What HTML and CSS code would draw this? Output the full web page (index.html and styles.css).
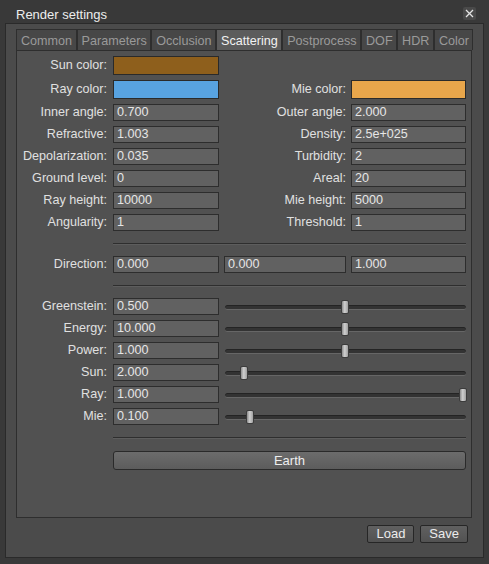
FILE: index.html
```html
<!DOCTYPE html>
<html lang="en">
<head>
    <meta charset="UTF-8">
    <title>Render settings</title>
    <link rel="stylesheet" href="styles.css">
</head>
<body>
    <div class="titlebar">
        <span class="title">Render settings</span>
        <span class="close">
            <svg width="13" height="13" viewBox="0 0 13 13"><path d="M3 3 L10 10 M10 3 L3 10" stroke="#e4e4e4" stroke-width="1.3" fill="none"/></svg>
        </span>
    </div>

    <div class="dialog">
        <div class="tabs">
            <div class="tab">Common</div>
            <div class="tab">Parameters</div>
            <div class="tab">Occlusion</div>
            <div class="tab active">Scattering</div>
            <div class="tab">Postprocess</div>
            <div class="tab">DOF</div>
            <div class="tab">HDR</div>
            <div class="tab">Color</div>
        </div>

        <div class="pane">
            <div class="form">
                <div class="row">
                    <div class="label">Sun color:</div>
                    <div class="swatch sun"></div>
                </div>
                <div class="row">
                    <div class="label">Ray color:</div>
                    <div class="swatch ray"></div>
                    <div class="label right">Mie color:</div>
                    <div class="swatch mie"></div>
                </div>
                <div class="row">
                    <div class="label">Inner angle:</div>
                    <div class="field">0.700</div>
                    <div class="label right">Outer angle:</div>
                    <div class="field">2.000</div>
                </div>
                <div class="row">
                    <div class="label">Refractive:</div>
                    <div class="field">1.003</div>
                    <div class="label right">Density:</div>
                    <div class="field">2.5e+025</div>
                </div>
                <div class="row">
                    <div class="label">Depolarization:</div>
                    <div class="field">0.035</div>
                    <div class="label right">Turbidity:</div>
                    <div class="field">2</div>
                </div>
                <div class="row">
                    <div class="label">Ground level:</div>
                    <div class="field">0</div>
                    <div class="label right">Areal:</div>
                    <div class="field">20</div>
                </div>
                <div class="row">
                    <div class="label">Ray height:</div>
                    <div class="field">10000</div>
                    <div class="label right">Mie height:</div>
                    <div class="field">5000</div>
                </div>
                <div class="row">
                    <div class="label">Angularity:</div>
                    <div class="field">1</div>
                    <div class="label right">Threshold:</div>
                    <div class="field">1</div>
                </div>

                <div class="sep"></div>

                <div class="row">
                    <div class="label">Direction:</div>
                    <div class="field">0.000</div>
                    <div class="field mid">0.000</div>
                    <div class="field">1.000</div>
                </div>

                <div class="sep"></div>

                <div class="row">
                    <div class="label">Greenstein:</div>
                    <div class="field">0.500</div>
                    <div class="slider"><div class="groove"></div><div class="knob" style="left: 116px"></div></div>
                </div>
                <div class="row">
                    <div class="label">Energy:</div>
                    <div class="field">10.000</div>
                    <div class="slider"><div class="groove"></div><div class="knob" style="left: 116px"></div></div>
                </div>
                <div class="row">
                    <div class="label">Power:</div>
                    <div class="field">1.000</div>
                    <div class="slider"><div class="groove"></div><div class="knob" style="left: 116px"></div></div>
                </div>
                <div class="row">
                    <div class="label">Sun:</div>
                    <div class="field">2.000</div>
                    <div class="slider"><div class="groove"></div><div class="knob" style="left: 15px"></div></div>
                </div>
                <div class="row">
                    <div class="label">Ray:</div>
                    <div class="field">1.000</div>
                    <div class="slider"><div class="groove"></div><div class="knob" style="left: 234px"></div></div>
                </div>
                <div class="row">
                    <div class="label">Mie:</div>
                    <div class="field">0.100</div>
                    <div class="slider"><div class="groove"></div><div class="knob" style="left: 21px"></div></div>
                </div>

                <div class="sep"></div>

                <button class="wide-btn">Earth</button>
            </div>
        </div>

        <div class="actions">
            <button class="btn">Load</button>
            <button class="btn">Save</button>
        </div>
    </div>
</body>
</html>
```

FILE: styles.css
```css
body {
    margin: 0;
    width: 489px;
    height: 564px;
    overflow: hidden;
    background: #393939;
    font-family: 'Liberation Sans', Arial, sans-serif;
    font-size: 12.6px;
    color: #e2e2e2;
}

.titlebar {
    height: 23px;
    box-sizing: border-box;
    display: flex;
    justify-content: space-between;
    align-items: flex-start;
    padding: 0 13px 0 16px;
}

.title {
    margin-top: 7px;
    line-height: 15px;
    font-size: 13px;
    color: #ededed;
}

.close {
    margin-top: 7px;
    width: 13px;
    height: 13px;
    background: #4a4a4a;
    border-radius: 2px;
    display: flex;
}

.dialog {
    margin: 0 5px;
    height: 535px;
    box-sizing: border-box;
    border: 1px solid #2a2a2a;
    background: #4b4b4b;
    padding: 5px 11px 0 10px;
}

.tabs {
    display: flex;
    height: 21px;
}

.tab {
    height: 21px;
    box-sizing: border-box;
    padding: 3px 3.5px 0 4px;
    line-height: 17px;
    border: 1px solid #2e2e2e;
    border-bottom: none;
    background: #474747;
    color: #9a9a9a;
    white-space: nowrap;
}

.tab.active {
    background: #5c5c5c;
    color: #f2f2f2;
}

.pane {
    height: 468px;
    box-sizing: border-box;
    border: 1px solid #2e2e2e;
    background: #515151;
    padding: 5px 5px 0 0;
}

.form {
    display: flex;
    flex-direction: column;
    gap: 5px;
}

.row {
    display: grid;
    grid-template-columns: 96px 106px 132px 115px;
    align-items: center;
}

.label {
    text-align: right;
    padding-right: 6px;
    line-height: 17px;
    white-space: nowrap;
    color: #e0e0e0;
}

.label.right {
    padding-right: 5px;
}

.field {
    height: 17px;
    box-sizing: border-box;
    border: 1px solid #2d2d2d;
    background: #616161;
    padding-left: 3px;
    line-height: 15px;
    color: #e6e6e6;
}

.field.mid {
    margin: 0 5px;
}

.swatch {
    height: 19px;
    box-sizing: border-box;
    border: 1px solid #2a2a2a;
}

.swatch.sun { background: #8e5f1c; }
.swatch.ray { background: #58a3e1; }
.swatch.mie { background: #e8a64b; }

.sep {
    margin: 7px 0 6px 96px;
    height: 2px;
    box-sizing: border-box;
    border-top: 1px solid #2e2e2e;
    border-bottom: 1px solid #5d5d5d;
}

.slider {
    grid-column: 3 / 5;
    margin-left: 6px;
    position: relative;
    height: 17px;
    display: flex;
    align-items: center;
}

.groove {
    flex: 1;
    margin-top: 2px;
    height: 5px;
    box-sizing: border-box;
    background: #333;
    border-top: 1px solid #242424;
    border-bottom: 1px solid #666;
    border-radius: 3px;
}

.knob {
    position: absolute;
    top: 2px;
    width: 8px;
    height: 14px;
    box-sizing: border-box;
    border: 1px solid #3c3c3c;
    border-radius: 2px;
    background: linear-gradient(to right, #8c8c8c, #cfcfcf 45%, #a0a0a0);
}

.wide-btn {
    margin: 1px 0 0 96px;
    height: 19px;
    box-sizing: border-box;
    border: 1px solid #2a2a2a;
    border-radius: 3px;
    background: linear-gradient(#6c6c6c, #5c5c5c);
    color: #eeeeee;
    font-family: inherit;
    font-size: 13px;
    line-height: 17px;
    padding: 0;
}

.actions {
    display: flex;
    justify-content: flex-end;
    gap: 6px;
    margin: 7px 4px 0 0;
}

.btn {
    height: 18px;
    box-sizing: border-box;
    border: 1px solid #262626;
    border-radius: 2px;
    background: linear-gradient(#606060, #525252);
    color: #ececec;
    font-family: inherit;
    font-size: 13px;
    line-height: 16px;
    padding: 0 8px;
}
```
